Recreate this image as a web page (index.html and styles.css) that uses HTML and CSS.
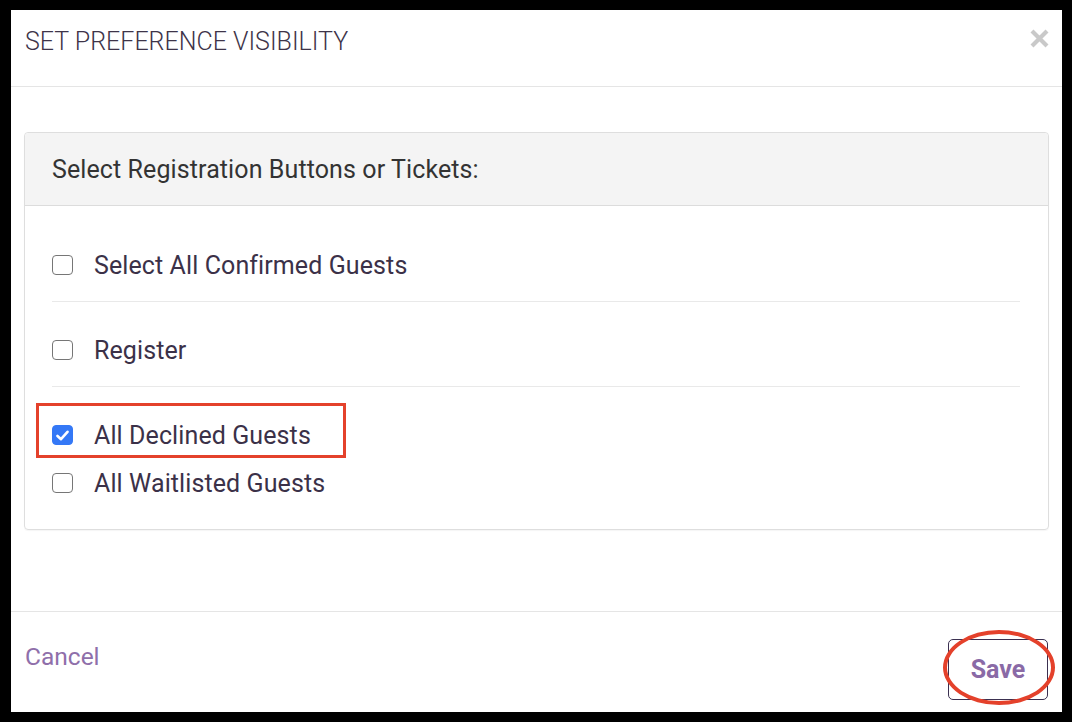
FILE: index.html
```html
<!DOCTYPE html>
<html>
<head>
<meta charset="utf-8">
<link rel="stylesheet" href="styles.css">
</head>
<body>
<div class="modal">
  <div class="modal-header">
    <h1 class="modal-title">SET PREFERENCE VISIBILITY</h1>
    <span class="close">
      <svg width="19" height="19" viewBox="0 0 19 19"><path d="M2 2L17 17M17 2L2 17" stroke="#c9c9c9" stroke-width="4.2" stroke-linecap="butt"/></svg>
    </span>
  </div>
  <div class="modal-body">
    <div class="panel">
      <div class="panel-heading">Select Registration Buttons or Tickets:</div>
      <div class="panel-body">
        <div class="group">
          <label class="item"><span class="box"></span><span class="label">Select All Confirmed Guests</span></label>
        </div>
        <div class="group">
          <label class="item"><span class="box"></span><span class="label">Register</span></label>
        </div>
        <div class="group last">
          <label class="item highlighted"><span class="box checked"><svg width="13" height="11" viewBox="0 0 13 11"><path d="M1.5 6L5 9.2L11.5 1.8" fill="none" stroke="#fff" stroke-width="2.6" stroke-linecap="round" stroke-linejoin="round"/></svg></span><span class="label">All Declined Guests</span><span class="annot-rect"></span></label>
          <label class="item"><span class="box"></span><span class="label">All Waitlisted Guests</span></label>
        </div>
      </div>
    </div>
  </div>
  <div class="modal-footer">
    <a class="cancel">Cancel</a>
    <button class="save">Save<span class="annot-ellipse"></span></button>
  </div>
</div>
</body>
</html>
```
FILE: styles.css
```css
html, body {
  margin: 0;
  padding: 0;
  background: #000;
}
body {
  padding: 10px 10px 10px 11px;
  font-family: Roboto, "Liberation Sans", sans-serif;
}
.modal {
  background: #fff;
  height: 702px;
  display: flex;
  flex-direction: column;
}
.modal-header {
  height: 76px;
  border-bottom: 1px solid #e5e5e5;
  display: flex;
  align-items: flex-start;
  justify-content: space-between;
  padding: 0 14px 0 14px;
}
.modal-title {
  margin: 0;
  padding-top: 17px;
  font-size: 25px;
  font-weight: 300;
  color: #3e3449;
  letter-spacing: 0;
}
.close {
  margin-top: 19px;
  margin-right: -1px;
  width: 19px;
  height: 19px;
}
.modal-body {
  flex: 1;
  padding: 45px 13px 0 13px;
}
.panel {
  border: 1px solid #dedede;
  border-radius: 4px;
  box-shadow: 0 1px 1px rgba(0,0,0,0.04);
}
.panel-heading {
  background: #f4f4f4;
  border-bottom: 1px solid #dcdcdc;
  border-radius: 4px 4px 0 0;
  height: 72px;
  padding: 0 27px;
  display: flex;
  align-items: center;
  font-size: 25px;
  letter-spacing: 0.1px;
  color: #333;
}
.panel-body {
  padding: 35px 28px 22px 27px;
}
.group {
  padding-bottom: 12px;
  border-bottom: 1px solid #e9e9e9;
  margin-bottom: 24px;
}
.group.last {
  padding-bottom: 0;
  border-bottom: none;
  margin-bottom: 0;
}
.item {
  display: flex;
  align-items: center;
  height: 48px;
  position: relative;
}
.box {
  width: 18.5px;
  height: 18.5px;
  border: 1.5px solid #767676;
  border-radius: 4px;
  box-sizing: content-box;
  flex: none;
  display: flex;
  align-items: center;
  justify-content: center;
}
.box.checked {
  background: #3478f6;
  border-color: #3478f6;
}
.label {
  margin-left: 21.5px;
  font-size: 25px;
  letter-spacing: 0.1px;
  color: #3b3148;
}
.annot-rect {
  position: absolute;
  left: -16px;
  top: -8px;
  width: 304px;
  height: 49px;
  border: 3px solid #e4412b;
}
.modal-footer {
  height: 100px;
  border-top: 1px solid #e5e5e5;
  display: flex;
  align-items: flex-start;
  justify-content: space-between;
  padding: 0 14px 0 14px;
}
.cancel {
  margin-top: 30px;
  font-size: 24.5px;
  color: #8f6faa;
}
.save {
  position: relative;
  margin-top: 27px;
  width: 100px;
  height: 61px;
  background: #fff;
  border: 1px solid #3b3050;
  border-radius: 5px;
  font-family: Roboto, "Liberation Sans", sans-serif;
  font-size: 25px;
  font-weight: 700;
  color: #8a6aa6;
  padding: 0;
}
.annot-ellipse {
  position: absolute;
  left: -6px;
  top: -10px;
  width: 104px;
  height: 67px;
  border: 4px solid #e4412b;
  border-radius: 50%;
}
```
